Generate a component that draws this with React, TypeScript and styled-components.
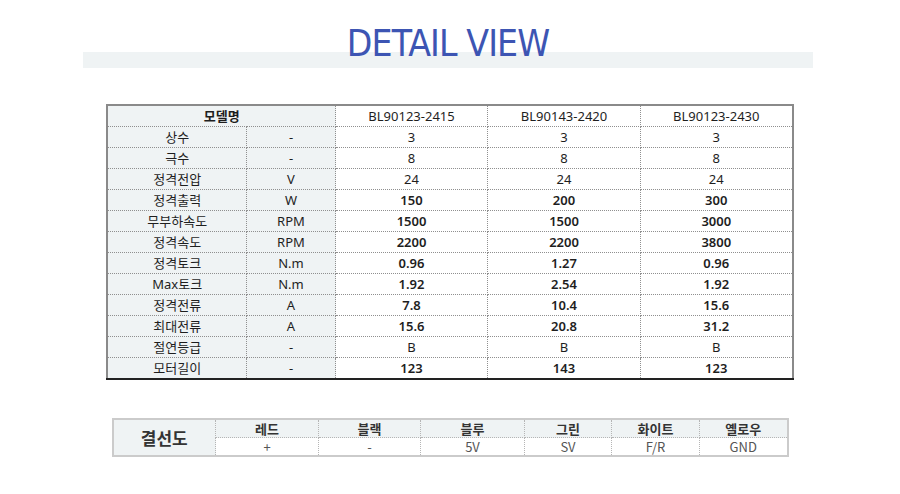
import React from "react";
import styled, { createGlobalStyle } from "styled-components";

const Global = createGlobalStyle`
  html, body { margin: 0; padding: 0; background: #fff; }
  body { font-family: "Noto Sans", "Noto Sans CJK KR", sans-serif; color: #222; }
`;

const Page = styled.div`
  width: 900px;
  padding-top: 22px;
  display: flex;
  flex-direction: column;
  align-items: center;
`;

const Header = styled.div`
  width: 730px;
  height: 46px;
  margin-left: -4px;
  background: linear-gradient(to bottom, transparent 30px, #eff3f4 30px);
  display: flex;
  justify-content: center;
`;

const Title = styled.h1`
  margin: 0;
  font-family: "Liberation Sans Narrow", "DejaVu Sans Condensed", "Liberation Sans", sans-serif;
  font-weight: 400;
  font-size: 37px;
  line-height: 44px;
  color: #3d55b3;
  letter-spacing: -0.9px;
`;

const SpecTable = styled.table`
  margin-top: 36px;
  width: 685px;
  border-collapse: collapse;
  table-layout: fixed;
  border-top: 2px solid #8a8a8a;
  border-left: 2px solid #8a8a8a;
  border-right: 2px solid #8a8a8a;
  border-bottom: 2px solid #222;
  font-size: 13px;
`;

const Col = styled.col<{ $w: number }>`
  width: ${(p) => p.$w}px;
`;

const Row = styled.tr`
  height: 21px;
`;

const Cell = styled.td<{ $head?: boolean; $bold?: boolean }>`
  padding: 0;
  text-align: center;
  line-height: 20px;
  border: 1px dotted #8f8f8f;
  background: ${(p) => (p.$head ? "#eff3f4" : "#fff")};
  font-weight: ${(p) => (p.$bold ? 600 : 400)};
  color: #1e1e1e;
  white-space: nowrap;
`;

const WiringTable = styled.table`
  margin-top: 38px;
  width: 675px;
  border-collapse: collapse;
  table-layout: fixed;
  border: 2px solid #cbcbcb;
`;

const WRow = styled.tr`
  height: 18px;
`;

const WCell = styled.td<{ $head?: boolean; $big?: boolean }>`
  padding: 0;
  text-align: center;
  line-height: 17px;
  border: 1px dotted #b5b5b5;
  background: ${(p) => (p.$head ? "#eff3f4" : "#fff")};
  font-family: "Noto Sans CJK KR", "Noto Sans", sans-serif;
  font-size: ${(p) => (p.$big ? "17px" : "13px")};
  font-weight: ${(p) => (p.$head ? 700 : 400)};
  color: ${(p) => (p.$head ? "#333" : "#555")};
`;

type Spec = { label: string; unit: string; values: string[]; bold?: boolean };

const specs: Spec[] = [
  { label: "상수", unit: "-", values: ["3", "3", "3"] },
  { label: "극수", unit: "-", values: ["8", "8", "8"] },
  { label: "정격전압", unit: "V", values: ["24", "24", "24"] },
  { label: "정격출력", unit: "W", values: ["150", "200", "300"], bold: true },
  { label: "무부하속도", unit: "RPM", values: ["1500", "1500", "3000"], bold: true },
  { label: "정격속도", unit: "RPM", values: ["2200", "2200", "3800"], bold: true },
  { label: "정격토크", unit: "N.m", values: ["0.96", "1.27", "0.96"], bold: true },
  { label: "Max토크", unit: "N.m", values: ["1.92", "2.54", "1.92"], bold: true },
  { label: "정격전류", unit: "A", values: ["7.8", "10.4", "15.6"], bold: true },
  { label: "최대전류", unit: "A", values: ["15.6", "20.8", "31.2"], bold: true },
  { label: "절연등급", unit: "-", values: ["B", "B", "B"] },
  { label: "모터길이", unit: "-", values: ["123", "143", "123"], bold: true },
];

const models = ["BL90123-2415", "BL90143-2420", "BL90123-2430"];
const specCols = [139, 89, 152, 153, 152];

const wires = [
  { name: "레드", value: "+" },
  { name: "블랙", value: "-" },
  { name: "블루", value: "5V" },
  { name: "그린", value: "SV" },
  { name: "화이트", value: "F/R" },
  { name: "옐로우", value: "GND" },
];
const wireCols = [103, 103, 102, 104, 87, 88, 88];

export default function App() {
  return (
    <>
      <Global />
      <Page>
        <Header>
          <Title>DETAIL VIEW</Title>
        </Header>
        <SpecTable>
          <colgroup>
            {specCols.map((w, i) => (
              <Col key={i} $w={w} />
            ))}
          </colgroup>
          <tbody>
            <Row>
              <Cell $head $bold colSpan={2}>모델명</Cell>
              {models.map((m) => (
                <Cell key={m}>{m}</Cell>
              ))}
            </Row>
            {specs.map((s) => (
              <Row key={s.label}>
                <Cell $head>{s.label}</Cell>
                <Cell $head>{s.unit}</Cell>
                {s.values.map((v, i) => (
                  <Cell key={i} $bold={s.bold}>{v}</Cell>
                ))}
              </Row>
            ))}
          </tbody>
        </SpecTable>
        <WiringTable>
          <colgroup>
            {wireCols.map((w, i) => (
              <Col key={i} $w={w} />
            ))}
          </colgroup>
          <tbody>
            <WRow>
              <WCell $head $big rowSpan={2}>결선도</WCell>
              {wires.map((w) => (
                <WCell key={w.name} $head>{w.name}</WCell>
              ))}
            </WRow>
            <WRow>
              {wires.map((w) => (
                <WCell key={w.name}>{w.value}</WCell>
              ))}
            </WRow>
          </tbody>
        </WiringTable>
      </Page>
    </>
  );
}
